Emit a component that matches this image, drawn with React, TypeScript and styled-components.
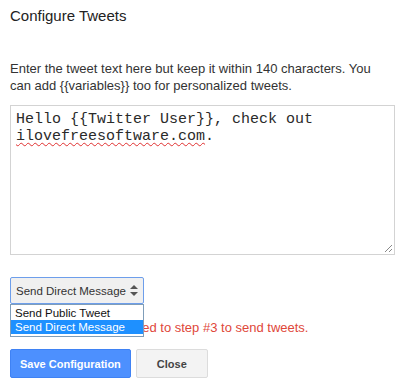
import styled, { createGlobalStyle } from 'styled-components';

const GlobalStyle = createGlobalStyle`
  body {
    margin: 0;
    background: #fff;
    font-family: "Liberation Sans", Arial, sans-serif;
  }
`;

const Page = styled.div`
  width: 385px;
  padding: 0 10px;
`;

const Title = styled.h3`
  margin: 7px 0 0;
  font-size: 15px;
  line-height: 17px;
  font-weight: normal;
  color: #222;
`;

const Intro = styled.p`
  margin: 36px 0 0;
  font-size: 13px;
  line-height: 17px;
  color: #333;
`;

const TextBox = styled.div`
  position: relative;
  box-sizing: border-box;
  margin-top: 11px;
  width: 385px;
  height: 150px;
  padding: 5px 5px;
  border: 1px solid #d3d3d3;
  font-family: "Liberation Mono", "Courier New", monospace;
  font-size: 15px;
  line-height: 17px;
  color: #2a2a2a;
  white-space: pre-wrap;
`;

const Misspelt = styled.span`
  text-decoration: underline wavy #e03030;
  text-decoration-thickness: 1px;
  text-underline-offset: 2px;
`;

const Grip = styled.svg`
  position: absolute;
  right: 1px;
  bottom: 1px;
`;

const SelectWrap = styled.div`
  position: relative;
  margin-top: 22px;
  width: 134px;
`;

const SelectBox = styled.div`
  box-sizing: border-box;
  display: flex;
  align-items: center;
  justify-content: space-between;
  height: 27px;
  padding: 0 5px 0 5px;
  border: 1px solid #6d9eeb;
  border-radius: 2px;
  background: #f0f0f0;
  font-size: 11.5px;
  color: #333;
`;

const OptionList = styled.ul`
  position: absolute;
  top: 100%;
  left: 0;
  right: 0;
  margin: 0;
  padding: 1px 0 2px;
  list-style: none;
  background: #fff;
  border: 1px solid #7f9db9;
  box-sizing: border-box;
`;

const Option = styled.li<{ $active?: boolean }>`
  height: 14px;
  line-height: 14px;
  padding: 0 4px;
  font-size: 11.5px;
  color: ${p => (p.$active ? '#fff' : '#111')};
  background: ${p => (p.$active ? '#1e90ff' : 'transparent')};
`;

const Notice = styled.div`
  margin-top: 15px;
  font-size: 13px;
  line-height: 17px;
  color: #e0473a;
`;

const Actions = styled.div`
  display: flex;
  gap: 5px;
  margin-top: 13px;
`;

const Button = styled.button<{ $primary?: boolean }>`
  box-sizing: border-box;
  height: 29px;
  padding: 0 ${p => (p.$primary ? '9px' : '20px')};
  border-radius: 2px;
  font-family: "Liberation Sans", Arial, sans-serif;
  font-size: 11px;
  font-weight: bold;
  border: 1px solid ${p => (p.$primary ? '#3f82f4' : '#dcdcdc')};
  background: ${p => (p.$primary ? '#4d90fe' : '#f3f3f3')};
  color: ${p => (p.$primary ? '#fff' : '#444')};
`;

function UpDown() {
  return (
    <svg width="8" height="11" viewBox="0 0 8 11">
      <path d="M4 0 L8 4 L0 4 Z" fill="#555" />
      <path d="M0 7 L8 7 L4 11 Z" fill="#555" />
    </svg>
  );
}

const introText =
  'Enter the tweet text here but keep it within 140 characters. You can add {{variables}} too for personalized tweets.';

export default function App() {
  return (
    <>
      <GlobalStyle />
      <Page>
        <Title>Configure Tweets</Title>
        <Intro>{introText}</Intro>
        <TextBox>
          {'Hello {{Twitter User}}, check out\n'}
          <Misspelt>ilovefreesoftware.com</Misspelt>.
          <Grip width="10" height="10" viewBox="0 0 10 10">
            <path d="M9 2 L2 9 M9 6 L6 9" stroke="#888" strokeWidth="1" />
          </Grip>
        </TextBox>
        <SelectWrap>
          <SelectBox>
            <span>Send Direct Message</span>
            <UpDown />
          </SelectBox>
          <OptionList>
            <Option>Send Public Tweet</Option>
            <Option $active>Send Direct Message</Option>
          </OptionList>
        </SelectWrap>
        <Notice>Message saved. Proceed to step #3 to send tweets.</Notice>
        <Actions>
          <Button $primary>Save Configuration</Button>
          <Button>Close</Button>
        </Actions>
      </Page>
    </>
  );
}
